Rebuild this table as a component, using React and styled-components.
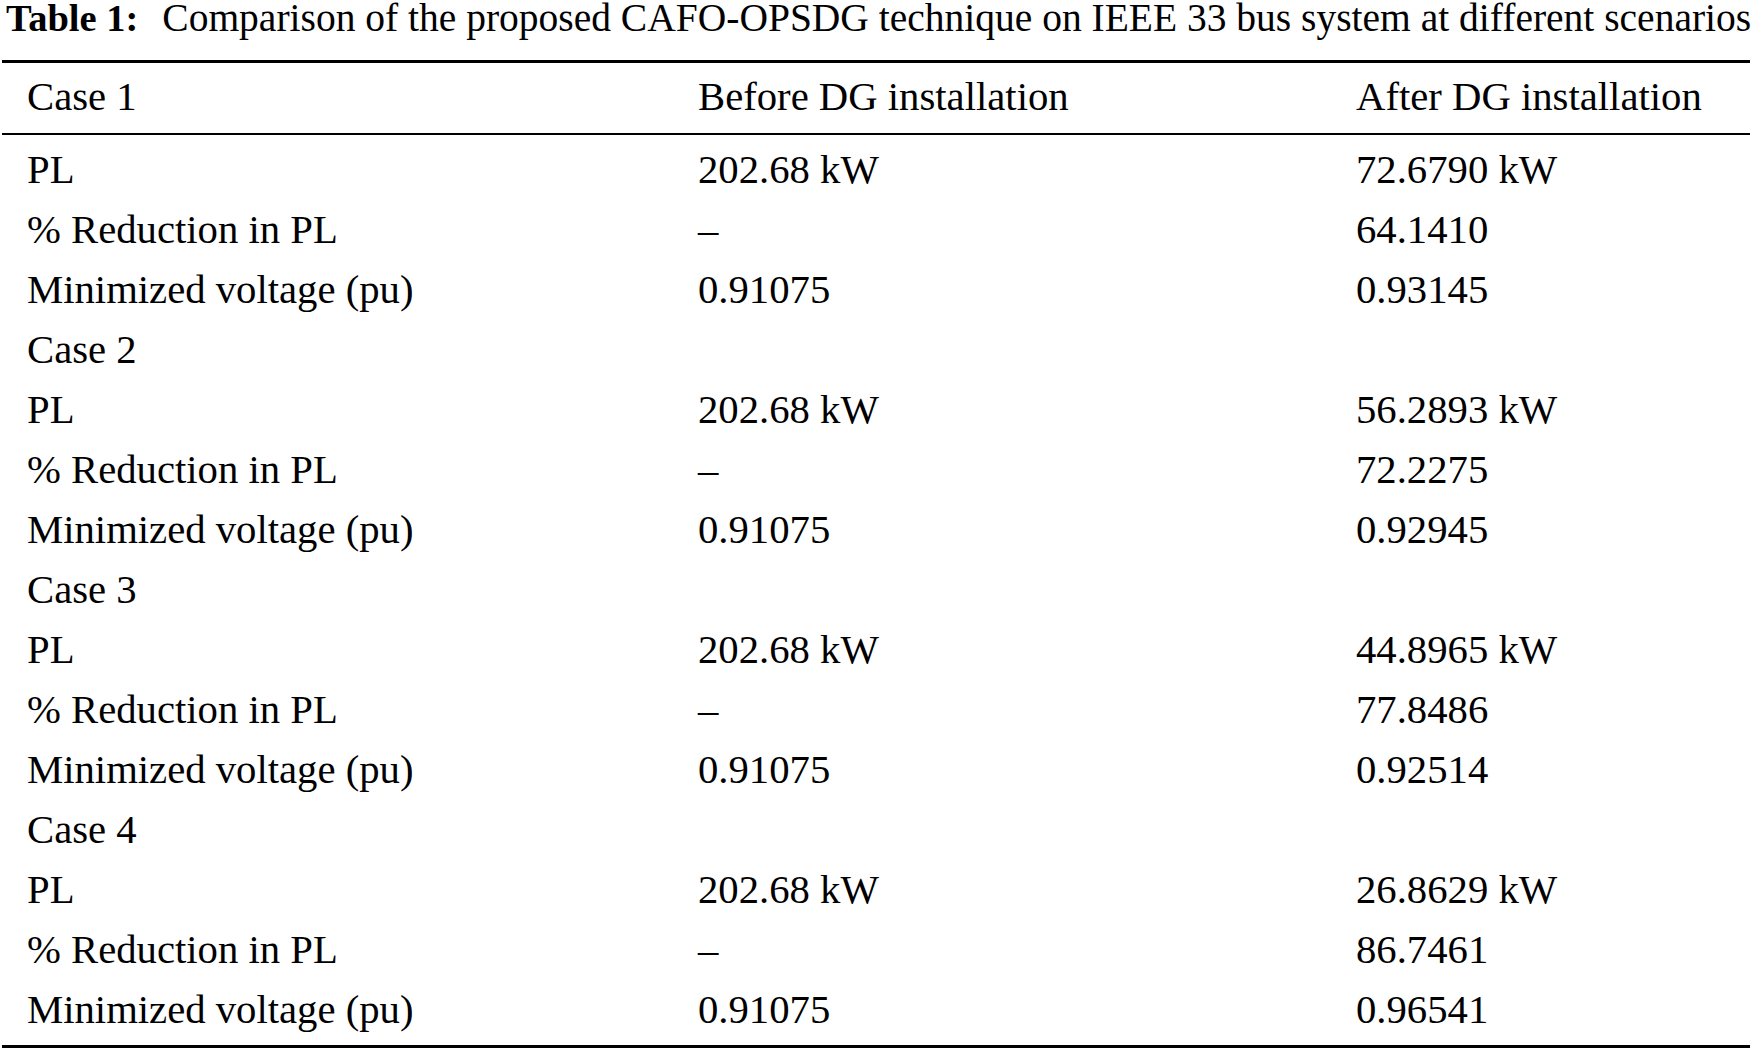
import React from "react"
import styled, { createGlobalStyle } from "styled-components"

const GlobalStyle = createGlobalStyle`
  html, body {
    margin: 0;
    padding: 0;
    background: #fff;
  }
  body {
    font-family: "Liberation Serif", "Times New Roman", serif;
    color: #000;
  }
`

const Figure = styled.div`
  width: 1753px;
  padding-left: 2px;
  box-sizing: border-box;
`

const Caption = styled.div`
  font-size: 39.5px;
  line-height: 36px;
  height: 36px;
  margin-bottom: 24px;
  padding-left: 4px;
  white-space: nowrap;
  b {
    font-size: 38.5px;
    font-weight: bold;
    margin-right: 24px;
  }
`

const Table = styled.table`
  width: 1748px;
  border-collapse: collapse;
  table-layout: fixed;
  font-size: 40.7px;
  line-height: 60px;
  border-top: 3px solid #000;
  border-bottom: 3px solid #000;
  td {
    padding: 0 0 0 25px;
    white-space: nowrap;
    vertical-align: top;
  }
`

const HeadRow = styled.tr`
  border-bottom: 2px solid #000;
  td {
    padding-top: 4px;
    padding-bottom: 6px;
  }
`

const BodyRow = styled.tr`
  td {
    padding-top: ${(p) => (p.$first ? "5px" : "0")};
    padding-bottom: ${(p) => (p.$last ? "5px" : "0")};
  }
`

const cases = [
  { after: "72.6790 kW", reduction: "64.1410", voltage: "0.93145" },
  { after: "56.2893 kW", reduction: "72.2275", voltage: "0.92945" },
  { after: "44.8965 kW", reduction: "77.8486", voltage: "0.92514" },
  { after: "26.8629 kW", reduction: "86.7461", voltage: "0.96541" },
]

// flatten the cases into plain rows; case 1's label lives in the header
const rows = []
cases.forEach((c, i) => {
  if (i > 0) rows.push([`Case ${i + 1}`, "", ""])
  rows.push(["PL", "202.68 kW", c.after])
  rows.push(["% Reduction in PL", "\u2013", c.reduction])
  rows.push(["Minimized voltage (pu)", "0.91075", c.voltage])
})

const App = () => {
  return (
    <Figure>
      <GlobalStyle />
      <Caption>
        <b>Table 1:</b>Comparison of the proposed CAFO-OPSDG technique on IEEE 33 bus system at different scenarios
      </Caption>
      <Table>
        <colgroup>
          <col style={{ width: "671px" }} />
          <col style={{ width: "658px" }} />
          <col />
        </colgroup>
        <thead>
          <HeadRow>
            <td>Case 1</td>
            <td>Before DG installation</td>
            <td>After DG installation</td>
          </HeadRow>
        </thead>
        <tbody>
          {rows.map((r, i) => (
            <BodyRow key={i} $first={i === 0} $last={i === rows.length - 1}>
              <td>{r[0]}</td>
              <td>{r[1]}</td>
              <td>{r[2]}</td>
            </BodyRow>
          ))}
        </tbody>
      </Table>
    </Figure>
  )
}

export default App
